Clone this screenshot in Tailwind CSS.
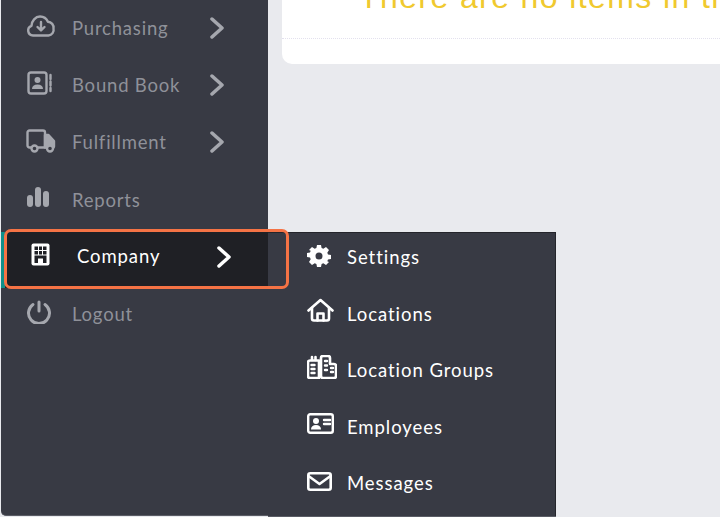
<!doctype html>
<html><head><script src="https://cdn.jsdelivr.net/npm/@tailwindcss/browser@4"></script></head>
<body class="m-0">
<div class="relative w-[720px] h-[517px] overflow-hidden bg-[#e9eaee] font-['Lato','Noto_Sans',sans-serif] flex">
  <aside class="w-[267px] h-[516px] ml-px bg-[#383a44] rounded-bl-[5px] border-b border-[#5a5c65] shrink-0 flex flex-col text-[#8f9199] text-[18.5px] tracking-[0.8px]">
    <div class="h-[57.25px] pl-[25px] pr-[44px] flex items-center">
      <svg class="w-[30px] h-[24px] mr-[16px] mb-[5px]" viewBox="0 0 30 24" fill="none" stroke="#a5a7ae" stroke-width="2.4" stroke-linecap="round" stroke-linejoin="round"><path d="M7 21.5a5 5 0 0 1-1.5-9.7C5.6 7 9.5 2.5 14 2.5c3.7 0 6.6 2.1 7.9 5.3a5.8 5.8 0 0 1 5.6 6.7 5.7 5.7 0 0 1-5 7Z"/><path d="M15 8v8M11.5 13l3.5 3.4 3.5-3.4"/></svg>
      <span class="flex-1">Purchasing</span>
      <svg class="w-[14px] h-[22px] mb-[2px]" viewBox="0 0 14 22" fill="none" stroke="#a5a7ae" stroke-width="3.5" stroke-linecap="round" stroke-linejoin="round"><path d="M2 2l10 9-10 9"/></svg>
    </div>
    <div class="h-[57.25px] pl-[25px] pr-[44px] flex items-center">
      <svg class="w-[30px] h-[24px] mr-[16px] mb-[5px]" viewBox="0 0 30 24" fill="none" stroke="#a5a7ae" stroke-width="2.4" stroke-linecap="round" stroke-linejoin="round"><rect x="2.5" y="1.5" width="18" height="21" rx="2.5"/><circle cx="11.5" cy="9" r="3" fill="#a5a7ae" stroke="none"/><path d="M6 18c0-3 2-4.500 5.500-4.500S17 15 17 18Z" fill="#a5a7ae" stroke="none"/><path d="M24.500 4v4M24.500 10.500v4M24.500 17v3"/></svg>
      <span class="flex-1">Bound Book</span>
      <svg class="w-[14px] h-[22px] mb-[2px]" viewBox="0 0 14 22" fill="none" stroke="#a5a7ae" stroke-width="3.5" stroke-linecap="round" stroke-linejoin="round"><path d="M2 2l10 9-10 9"/></svg>
    </div>
    <div class="h-[57.25px] pl-[25px] pr-[44px] flex items-center">
      <svg class="w-[30px] h-[24px] mr-[16px] mb-[5px]" viewBox="0 0 30 24" fill="none" stroke="#a5a7ae" stroke-width="2.4" stroke-linecap="round" stroke-linejoin="round"><path d="M5 18.500H3.500a2 2 0 0 1-2-2V3.500a2 2 0 0 1 2-2H17a2 2 0 0 1 2 2v15h-7"/><path d="M19 6h3.500l5.500 6v5.500a1 1 0 0 1-1 1h-1H19Z" fill="#a5a7ae"/><circle cx="8.500" cy="19.500" r="3"/><circle cx="24" cy="19.500" r="3" fill="#383a44"/></svg>
      <span class="flex-1">Fulfillment</span>
      <svg class="w-[14px] h-[22px] mb-[2px]" viewBox="0 0 14 22" fill="none" stroke="#a5a7ae" stroke-width="3.5" stroke-linecap="round" stroke-linejoin="round"><path d="M2 2l10 9-10 9"/></svg>
    </div>
    <div class="h-[57.25px] pl-[25px] pr-[44px] flex items-center">
      <svg class="w-[30px] h-[24px] mr-[16px] mb-[5px]" viewBox="0 0 30 24" fill="#a5a7ae"><rect x="1" y="9" width="6" height="12" rx="3"/><rect x="9" y="1" width="6" height="20" rx="3"/><rect x="17" y="5" width="6" height="16" rx="3"/></svg>
      <span class="flex-1">Reports</span>
    </div>
    <div class="h-[57.25px]"></div>
    <div class="h-[57.25px] pl-[25px] pr-[44px] flex items-center">
      <svg class="w-[30px] h-[24px] mr-[16px] mb-[5px]" viewBox="0 0 30 24" fill="none" stroke="#a5a7ae" stroke-width="3" stroke-linecap="round"><path d="M13 2v9"/><path d="M7 4.500a10.500 10.500 0 1 0 12 0"/></svg>
      <span class="flex-1">Logout</span>
    </div>
  </aside>
  <main class="flex-1 min-w-0">
    <div class="ml-[14px] h-[64px] bg-white rounded-bl-[10px] overflow-hidden relative">
      <div class="h-[39px] border-b border-dotted border-[#e3e1ee] overflow-hidden">
        <p class="pl-[77px] -mt-[23px] text-[32px] leading-[40px] tracking-[1.4px] text-[#f0c92f] whitespace-nowrap font-['Liberation_Sans',sans-serif]">There are no items in the cart</p>
      </div>
    </div>
  </main>
  <div class="absolute left-[268px] top-[232px] w-[288px] h-[284px] bg-[#383a44] border-t border-r border-[#24252b] flex flex-col text-white text-[18.5px] tracking-[0.95px]">
    <div class="h-[56.5px] -mt-[3px] pl-[39px] flex items-center gap-[16px]">
      <svg class="w-[24px] h-[24px] -mt-[4px]" viewBox="0 0 24 24" fill="#fff"><path fill-rule="evenodd" d="M10 1h4l.6 3 1.700.7L19 3l3 3-1.700 2.700.7 1.700 3 .6v4l-3 .6-.7 1.700L22 18l-3 3-2.700-1.700-1.700.7-.6 3h-4l-.6-3-1.700-.7L5 21l-3-3 1.700-2.700-.7-1.700-3-.6v-4l3-.6.7-1.700L2 6l3-3 2.700 1.700 1.700-.7ZM12 8.500a3.500 3.500 0 1 0 0 7 3.500 3.500 0 0 0 0-7Z"/></svg>
      <span>Settings</span>
    </div>
    <div class="h-[56.5px] pl-[39px] flex items-center gap-[13px]">
      <svg class="w-[27px] h-[24px] -mt-[10px]" viewBox="0 0 27 24" fill="none" stroke="#fff" stroke-width="2.6" stroke-linecap="round" stroke-linejoin="round"><path d="M1.500 12.500 13.500 2l12 10.500"/><path d="M5 10v10.500a2 2 0 0 0 2 2h13a2 2 0 0 0 2-2V10"/><path d="M10.500 22.500v-7h6v7"/></svg>
      <span>Locations</span>
    </div>
    <div class="h-[56.5px] pl-[39px] flex items-center gap-[10px]">
      <svg class="w-[30px] h-[24px] -mt-[8px]" viewBox="0 0 30 24" fill="none" stroke="#fff" stroke-width="2.6" stroke-linecap="round" stroke-linejoin="round"><path d="M12 5.500H3a2 2 0 0 0-2 2V21a2 2 0 0 0 2 2h9Z"/><path d="M5 5V2M8.500 5V2"/><path d="M14 21V3a2 2 0 0 1 2-2h5a2 2 0 0 1 2 2v6h4a2 2 0 0 1 2 2v10a2 2 0 0 1-2 2H16a2 2 0 0 1-2-2Z"/><path d="M4.500 10h3M4.500 14h3M4.500 18h3M18 6h2M18 10.500h2M18 15h2M24 13h2M24 17h2" stroke-width="2.400"/></svg>
      <span>Location Groups</span>
    </div>
    <div class="h-[56.5px] pl-[39px] flex items-center gap-[13px]">
      <svg class="w-[27px] h-[21px] -mt-[9px]" viewBox="0 0 27 21" fill="none" stroke="#fff" stroke-width="2.4" stroke-linejoin="round" stroke-linecap="round"><rect x="1.200" y="1.200" width="24.600" height="18.600" rx="2"/><circle cx="9" cy="8" r="3" fill="#fff" stroke="none"/><path d="M4 16.500c0-3 2-4.500 5-4.500s5 1.500 5 4.500Z" fill="#fff" stroke="none"/><path d="M17 7h6M17 11h6"/></svg>
      <span>Employees</span>
    </div>
    <div class="h-[56.5px] pl-[39px] flex items-center gap-[15px]">
      <svg class="w-[25px] h-[19px] -mt-[5px]" viewBox="0 0 25 19" fill="none" stroke="#fff" stroke-width="2.6" stroke-linejoin="round" stroke-linecap="round"><rect x="1.300" y="1.300" width="22.400" height="16.400" rx="2"/><path d="m1.500 4 11 8 11-8"/></svg>
      <span>Messages</span>
    </div>
  </div>
  <div class="absolute left-[268px] top-[516px] w-[288px] h-px bg-[#5a5c65]"></div>
  <div class="absolute left-[1px] top-[232px] w-[267px] h-[56px] bg-[#1f2025]"></div>
  <div class="absolute left-[1px] top-[232px] w-[4px] h-[56px] bg-[#0f8f8a]"></div>
  <div class="absolute left-[268px] top-[233px] w-[20px] h-[53px] bg-[#383a44]"></div>
  <div class="absolute left-[4px] top-[229px] w-[285px] h-[60px] rounded-[7px] border-[3px] border-[#f57345] pl-[24px] pr-[55px] flex items-center text-white text-[18.5px] tracking-[0.9px]">
    <svg class="w-[19px] h-[23px] mr-[27px] mb-[9px]" viewBox="0 0 19 23"><rect x="0.500" y="0.500" width="18" height="22" rx="2" fill="#fff"/><path d="M3.500 3.500h3.500v3.500H3.500zM8 3.500h3v3.500H8zM12 3.500h3.500v3.500H12zM3.500 8h3.500v3.500H3.500zM8 8h3v3.500H8zM12 8h3.500v3.500H12zM3.500 12.500h12V20h-3.500v-4.500h-5V20H3.500z" fill="#1f2025"/></svg>
    <span class="flex-1 mb-[4px]">Company</span>
    <svg class="w-[14px] h-[22px] mb-[5px]" viewBox="0 0 14 22" fill="none" stroke="#fff" stroke-width="3.500" stroke-linecap="round" stroke-linejoin="round"><path d="M2 2l10 9-10 9"/></svg>
  </div>
</div>
</body></html>
